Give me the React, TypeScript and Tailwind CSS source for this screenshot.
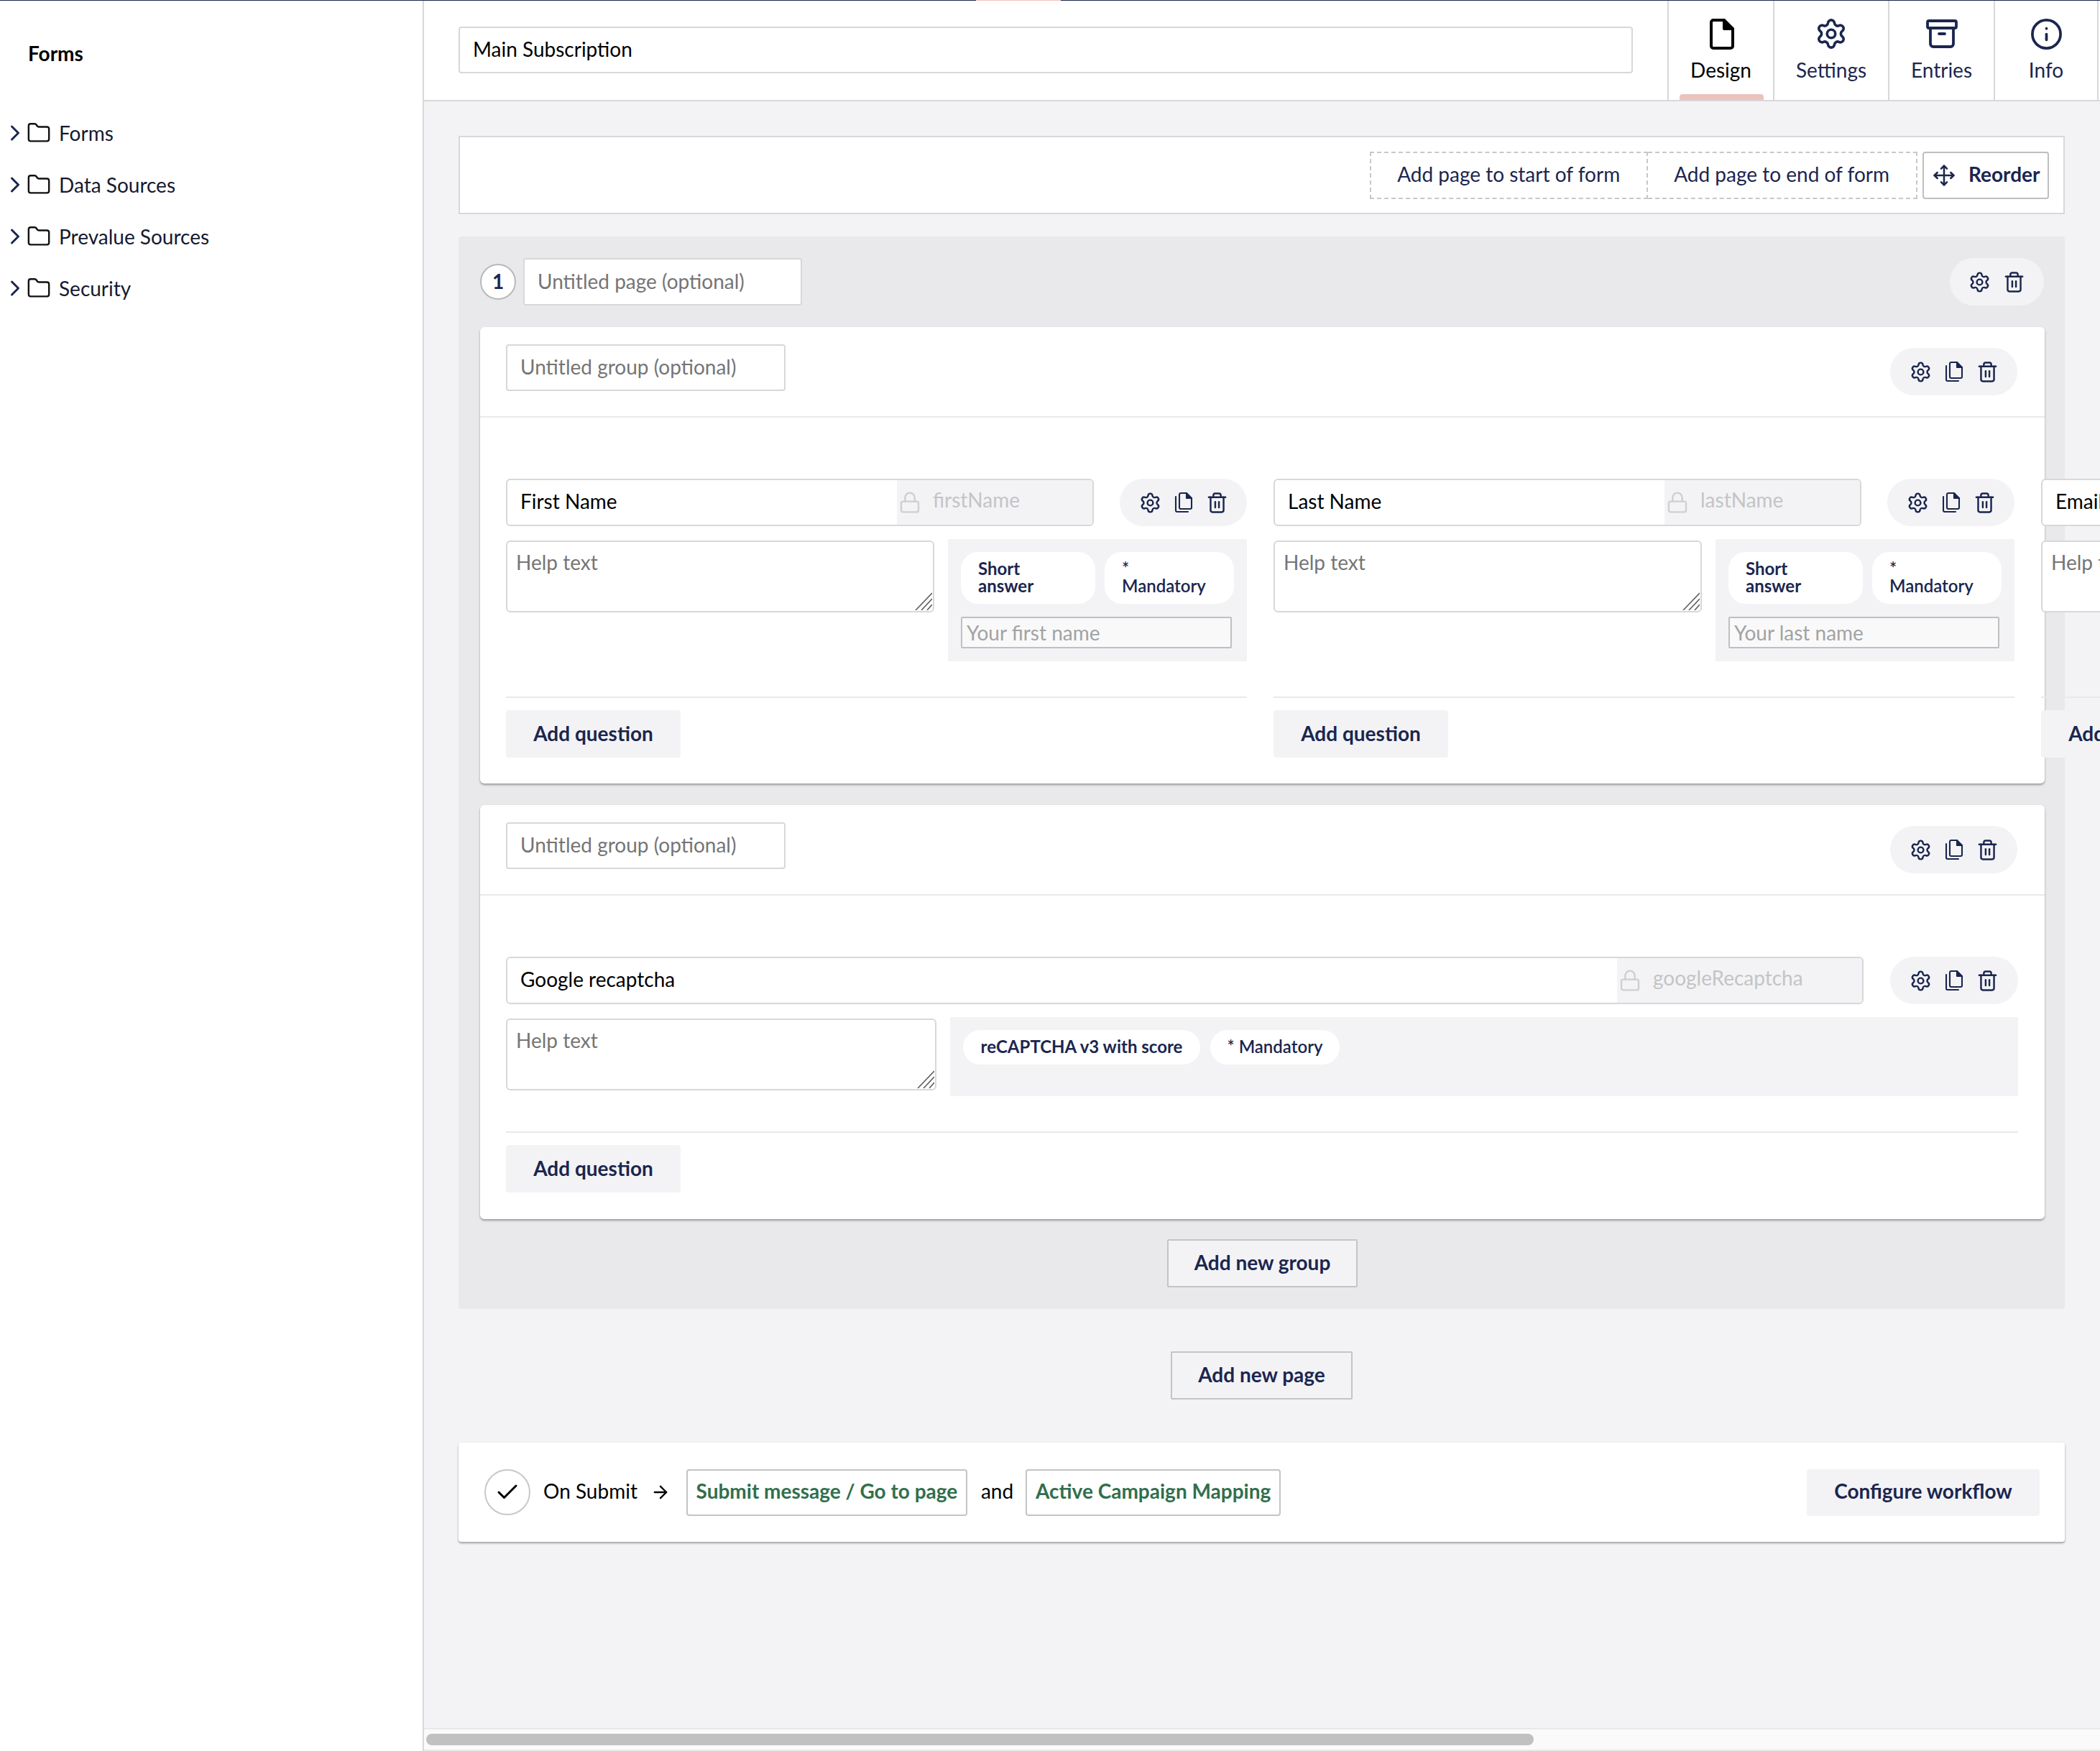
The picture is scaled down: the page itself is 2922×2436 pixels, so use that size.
import { Archive, ArrowRight, Check, ChevronRight, Folder, Info, Lock, Move, Settings, Trash2 } from 'lucide-react';

const NAVY = '#1b264f';

function CopyIcon() {
  return (
    <svg width="28" height="30" viewBox="0 0 28 30" fill="none" stroke={NAVY} strokeWidth="2.1" strokeLinejoin="round" strokeLinecap="round">
      <path d="M10 2h8l7 7v13a2 2 0 0 1-2 2H10a2 2 0 0 1-2-2V4a2 2 0 0 1 2-2z" />
      <path d="M18 2v7h7" fill={NAVY} />
      <path d="M3 7v19a2 2 0 0 0 2 2h15" />
    </svg>
  );
}

function FileIcon() {
  return (
    <svg width="36" height="44" viewBox="0 0 36 44" fill="none" stroke="#000" strokeWidth="4" strokeLinejoin="round" strokeLinecap="round">
      <path d="M7 3h15l12 12v24a3 3 0 0 1-3 3H7a3 3 0 0 1-3-3V6a3 3 0 0 1 3-3z" />
      <path d="M22 3v12h12" fill="#000" />
    </svg>
  );
}

function Handle() {
  return (
    <svg className="absolute right-[3px] bottom-[3px]" width="24" height="25" viewBox="0 0 24 25" fill="none" stroke="#5f5f5f" strokeWidth="1.6">
      <path d="M1 25L24 1M9 25L24 9M17 25L24 17" />
    </svg>
  );
}

function Actions({ copy = true, width }: { copy?: boolean; width: string }) {
  return (
    <div className={`flex h-[66px] shrink-0 items-center justify-center gap-[17px] rounded-[33px] bg-[#f3f3f5] ${width}`}>
      <Settings size={31} color={NAVY} strokeWidth={1.9} />
      {copy && <CopyIcon />}
      <Trash2 size={31} color={NAVY} strokeWidth={1.9} />
    </div>
  );
}

function HelpText({ width }: { width: string }) {
  return (
    <div className={`relative mt-[2px] h-[100px] shrink-0 ${width}`}>
      <textarea
        placeholder="Help text"
        className="h-full w-full resize-none rounded-[6px] border-2 border-[#d8d7d9] bg-white px-[12px] pt-[12px] text-[28px] leading-[32px] text-black outline-none placeholder:text-[#757575]"
      />
      <Handle />
    </div>
  );
}

function FieldName({ label, alias, width, aliasWidth }: { label: string; alias: string; width: string; aliasWidth: string }) {
  return (
    <div className={`flex h-[66px] shrink-0 overflow-hidden rounded-[6px] border-2 border-[#d8d7d9] bg-white ${width}`}>
      <div className="flex min-w-0 flex-1 items-center pb-[5px] pl-[18px] text-[28px] whitespace-nowrap text-black">{label}</div>
      <div className={`flex shrink-0 items-center gap-[16px] bg-[#f3f3f5] pl-[2px] text-[28px] text-[#c4c4c6] ${aliasWidth}`}>
        <Lock size={32} strokeWidth={1.8} color="#cfcfd1" />
        <span className="-mt-[8px]">{alias}</span>
      </div>
    </div>
  );
}

function AddQuestion() {
  return (
    <button className="h-[66px] w-[243px] shrink-0 rounded-[4px] bg-[#f3f3f5] pb-[3px] text-[28px] font-bold text-[#1b264f]">
      Add question
    </button>
  );
}

function Question({ label, alias, placeholder }: { label: string; alias: string; placeholder: string }) {
  return (
    <div className="w-[1031px] shrink-0">
      <div className="flex justify-between">
        <FieldName label={label} alias={alias} width="w-[818px]" aliasWidth="w-[272px]" />
        <Actions width="w-[177px]" />
      </div>
      <div className="mt-[18px] flex justify-between">
        <HelpText width="w-[596px]" />
        <div className="h-[170px] w-[416px] shrink-0 bg-[#f3f3f5] p-[18px]">
          <div className="flex gap-[13px]">
            <div className="h-[72px] w-[187px] rounded-[24px] bg-white px-[24px] pt-[11px] text-[24px] leading-[24px] font-bold text-[#1b264f]">Short answer</div>
            <div className="h-[72px] w-[180px] rounded-[24px] bg-white px-[24px] pt-[11px] text-[24px] leading-[24px] font-semibold text-[#1b264f]">
              *<br />Mandatory
            </div>
          </div>
          <input
            placeholder={placeholder}
            className="mt-[18px] h-[44px] w-[377px] rounded-[2px] border-2 border-[#bfbfc4] bg-[#f9f9fa] px-[6px] text-[28px] text-black outline-none placeholder:text-[#a3a3a3]"
          />
        </div>
      </div>
      <div className="mt-[49px] h-[2px] bg-[#e9e9eb]" />
      <div className="mt-[17px]">
        <AddQuestion />
      </div>
    </div>
  );
}

function GroupHeader() {
  return (
    <div className="flex h-[126px] items-start justify-between border-b-2 border-[#e9e9eb] pt-[24px] pr-[38px] pl-[36px]">
      <input
        placeholder="Untitled group (optional)"
        className="h-[65px] w-[389px] rounded-[4px] border-2 border-[#d8d7d9] bg-white px-[18px] pb-[3px] text-[28px] outline-none placeholder:text-[#757575]"
      />
      <div className="mt-[5px]">
        <Actions width="w-[177px]" />
      </div>
    </div>
  );
}

function TreeItem({ label }: { label: string }) {
  return (
    <div className="flex h-[72px] items-center pl-[3px] text-[28px] text-[#151a30]">
      <ChevronRight size={36} color={NAVY} strokeWidth={2} className="shrink-0" />
      <Folder size={34} color="#111" strokeWidth={1.7} className="-ml-[2px] shrink-0" />
      <span className="ml-[11px]">{label}</span>
    </div>
  );
}

function Tab({ label, active, width, children }: { label: string; active?: boolean; width: string; children: React.ReactNode }) {
  return (
    <div className={`relative flex shrink-0 flex-col items-center border-r-2 border-[#d8d7d9] pt-[24px] ${width}`}>
      <div className="flex h-[46px] items-center">{children}</div>
      <span className={`mt-[6px] text-[28px] ${active ? 'text-black' : 'text-[#1b264f]'}`}>{label}</span>
      {active && <div className="absolute bottom-0 left-[15px] h-[8px] w-[117px] rounded-t-[4px] bg-[#edc2bd]" />}
    </div>
  );
}

export default function App() {
  return (
    <div className="relative flex h-[2436px] w-[2922px] overflow-hidden bg-white font-['Lato',sans-serif]">
      {/* thin top bar */}
      <div className="absolute top-0 left-0 z-10 h-[1px] w-full bg-[#1b264f]" />
      <div className="absolute top-0 left-[1358px] z-10 h-[1px] w-[118px] bg-[#f5c1bc]" />

      <aside className="w-[590px] shrink-0 border-r-2 border-[#d8d7d9]">
        <h1 className="pt-[56px] pl-[39px] text-[28px] leading-[36px] font-bold text-black">Forms</h1>
        <div className="mt-[57px]">
          {['Forms', 'Data Sources', 'Prevalue Sources', 'Security'].map((label) => (
            <TreeItem key={label} label={label} />
          ))}
        </div>
      </aside>

      <main className="flex min-w-0 flex-1 flex-col bg-[#f3f3f5]">
        <header className="flex h-[141px] shrink-0 border-b-2 border-[#d8d7d9] bg-white pr-[2px]">
          <div className="flex-1 pt-[37px] pl-[48px]">
            <input
              defaultValue="Main Subscription"
              className="h-[65px] w-[1634px] rounded-[4px] border-2 border-[#d8d7d9] bg-white px-[18px] pb-[3px] text-[28px] text-black outline-none"
            />
          </div>
          <div className="flex border-l-2 border-[#d8d7d9]">
            <Tab label="Design" active width="w-[147px]">
              <FileIcon />
            </Tab>
            <Tab label="Settings" width="w-[160px]">
              <Settings size={46} color={NAVY} strokeWidth={1.9} />
            </Tab>
            <Tab label="Entries" width="w-[147px]">
              <Archive size={48} color={NAVY} strokeWidth={1.9} />
            </Tab>
            <Tab label="Info" width="w-[144px]">
              <Info size={47} color={NAVY} strokeWidth={1.9} />
            </Tab>
          </div>
        </header>

        <div className="min-h-0 flex-1 overflow-hidden pt-[48px] pl-[48px]">
          <div className="flex h-[109px] w-[2235px] items-center justify-end border-2 border-[#d8d7d9] bg-white pr-[20px]">
            <div className="flex h-[66px] items-center border-2 border-dashed border-[#c8c8ca] pr-[37px] pb-[3px] pl-[36px] text-[28px] text-[#1b264f]">Add page to start of form</div>
            <div className="flex h-[66px] items-center border-2 border-l-0 border-dashed border-[#c8c8ca] pr-[37px] pb-[3px] pl-[36px] text-[28px] text-[#1b264f]">Add page to end of form</div>
            <button className="ml-[7px] flex h-[66px] w-[176px] items-center rounded-[4px] border-2 border-[#bfbfc1] pl-[12px] text-[28px] font-bold text-[#1b264f]">
              <Move size={32} color={NAVY} strokeWidth={1.9} />
              <span className="mb-[4px] ml-[18px]">Reorder</span>
            </button>
          </div>

          {/* page */}
          <div className="mt-[31px] w-[2235px] rounded-[4px] bg-[#e9e9eb] pt-[30px] pr-[28px] pb-[30px] pl-[30px]">
            <div className="flex items-center justify-between pr-[1px]">
              <div className="flex items-center gap-[10px]">
                <div className="flex h-[50px] w-[50px] items-center justify-center rounded-full border-2 border-[#b9b9bb] bg-white pb-[2px] text-[28px] font-bold text-[#1b264f]">1</div>
                <input
                  placeholder="Untitled page (optional)"
                  className="h-[66px] w-[388px] rounded-[4px] border-2 border-[#d8d7d9] bg-white px-[18px] pb-[3px] text-[28px] outline-none placeholder:text-[#757575]"
                />
              </div>
              <Actions copy={false} width="w-[131px]" />
            </div>

            <section className="mt-[30px] h-[635px] rounded-[6px] bg-white shadow-[0_2px_3px_rgba(0,0,0,0.35)]">
              <GroupHeader />
              <div className="flex gap-[37px] pt-[85px] pl-[36px]">
                <Question label="First Name" alias="firstName" placeholder="Your first name" />
                <Question label="Last Name" alias="lastName" placeholder="Your last name" />
                <Question label="Email" alias="email" placeholder="Your email" />
              </div>
            </section>

            <section className="mt-[30px] h-[576px] rounded-[6px] bg-white shadow-[0_2px_3px_rgba(0,0,0,0.35)]">
              <GroupHeader />
              <div className="pt-[85px] pr-[37px] pl-[36px]">
                <div className="flex justify-between">
                  <FieldName label="Google recaptcha" alias="googleRecaptcha" width="w-[1889px]" aliasWidth="w-[341px]" />
                  <Actions width="w-[178px]" />
                </div>
                <div className="mt-[18px] flex justify-between">
                  <HelpText width="w-[599px]" />
                  <div className="flex h-[110px] w-[1486px] shrink-0 items-start gap-[14px] bg-[#f3f3f5] px-[18px] pt-[18px]">
                    <div className="flex h-[48px] w-[330px] items-center justify-center rounded-[24px] bg-white pb-[2px] text-[24px] font-bold text-[#1b264f]">reCAPTCHA v3 with score</div>
                    <div className="flex h-[48px] w-[180px] items-center justify-center rounded-[24px] bg-white pb-[2px] text-[24px] font-semibold text-[#1b264f]">* Mandatory</div>
                  </div>
                </div>
                <div className="mt-[49px] h-[2px] bg-[#e9e9eb]" />
                <div className="mt-[17px]">
                  <AddQuestion />
                </div>
              </div>
            </section>

            <div className="mt-[28px] flex justify-center">
              <button className="h-[67px] w-[265px] rounded-[2px] border-2 border-[#c4c4c6] bg-[#f3f3f5] pb-[4px] text-[28px] font-bold text-[#1b264f]">Add new group</button>
            </div>
          </div>

          <div className="mt-[59px] flex w-[2235px] justify-center">
            <button className="h-[67px] w-[253px] rounded-[2px] border-2 border-[#c4c4c6] bg-[#f3f3f5] pb-[4px] text-[28px] font-bold text-[#1b264f]">Add new page</button>
          </div>

          {/* on submit */}
          <div className="mt-[60px] flex h-[138px] w-[2235px] items-center rounded-[4px] bg-white pr-[35px] pl-[36px] text-[28px] shadow-[0_2px_3px_rgba(0,0,0,0.35)]">
            <div className="flex h-[64px] w-[64px] items-center justify-center rounded-full border-2 border-[#c8c8ca]">
              <Check size={36} color="#000" strokeWidth={2} />
            </div>
            <span className="-mt-[4px] ml-[18px] text-black">On Submit</span>
            <ArrowRight size={28} color="#000" strokeWidth={2} className="ml-[18px]" />
            <button className="ml-[22px] h-[65px] w-[391px] rounded-[4px] border-2 border-[#c4c4c6] pb-[4px] font-bold text-[#316f4d]">Submit message / Go to page</button>
            <span className="-mt-[4px] ml-[19px] text-black">and</span>
            <button className="ml-[17px] h-[65px] w-[355px] rounded-[4px] border-2 border-[#c4c4c6] pb-[4px] font-bold text-[#316f4d]">Active Campaign Mapping</button>
            <button className="ml-auto h-[65px] w-[324px] rounded-[4px] bg-[#f3f3f5] pb-[4px] font-bold text-[#1b264f]">Configure workflow</button>
          </div>
        </div>

        {/* horizontal scrollbar */}
        <div className="h-[32px] shrink-0 border-y-2 border-[#e9e9eb] bg-[#fafafa] pt-[6px] pl-[3px]">
          <div className="h-[16px] w-[1541px] rounded-[8px] bg-[#c1c1c1]" />
        </div>
      </main>
    </div>
  );
}
